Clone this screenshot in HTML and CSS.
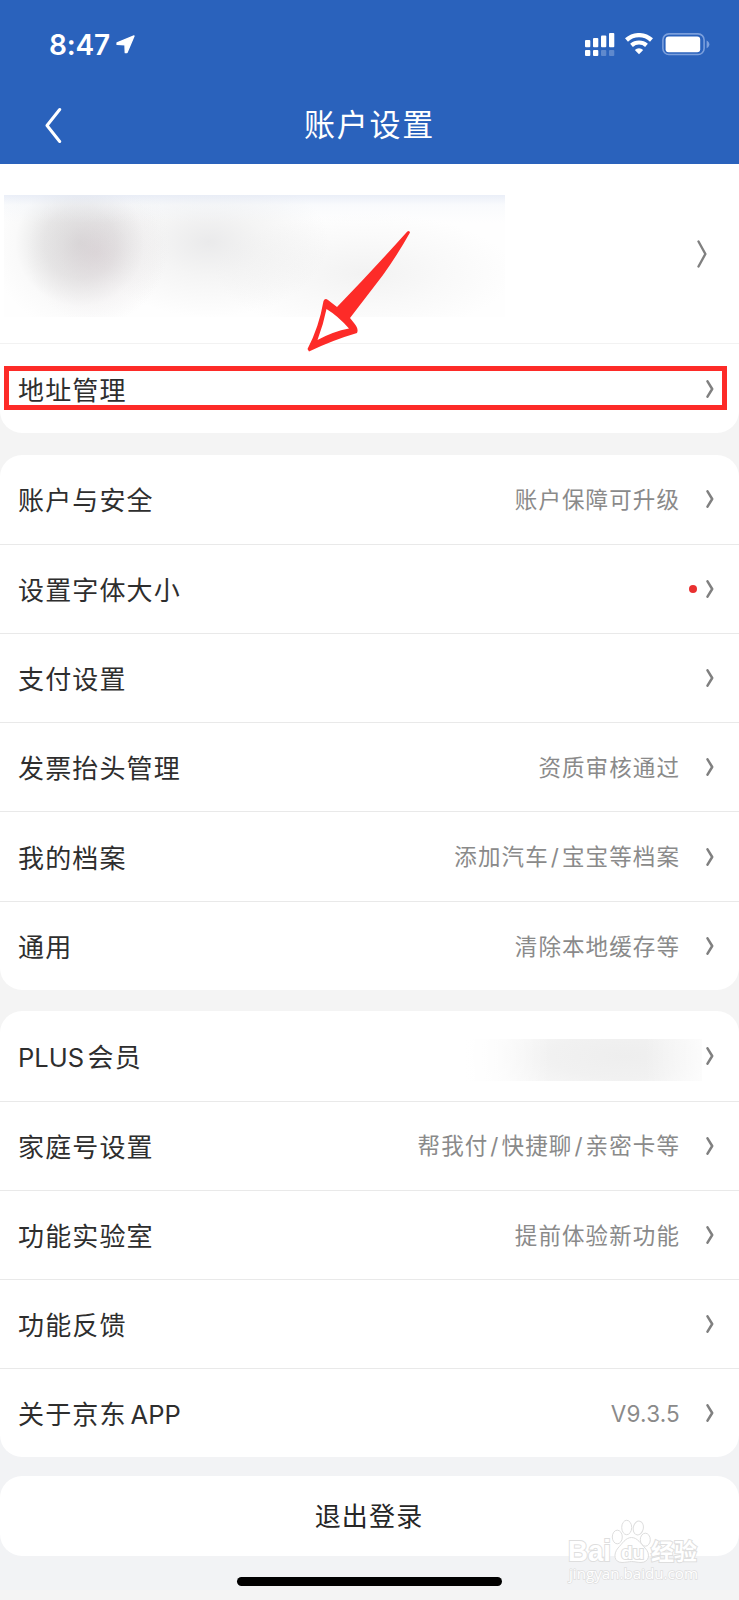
FILE: index.html
```html
<!DOCTYPE html>
<html lang="zh-CN">
<head>
    <meta charset="UTF-8">
    <meta name="viewport" content="width=device-width, initial-scale=1.0">
    <title>账户设置</title>
    <link rel="stylesheet" href="styles.css">
</head>
<body>
    <svg class="symbols" width="0" height="0">
        <symbol id="chevron" viewBox="0 0 8 18">
            <path d="M1.5 1.3 L6.2 9 L1.5 16.7" fill="none" stroke="#808080" stroke-width="2.5" stroke-linecap="round" stroke-linejoin="round"/>
        </symbol>
    </svg>

    <header class="header">
        <div class="status-bar">
            <div class="status-left">
                <span class="time">8:47</span>
                <svg class="location" width="19" height="19" viewBox="0 0 19 19">
                    <path d="M18 1 L11 17.6 L9.3 17.6 L9 9.9 L1.1 9.4 L1.1 7.8 Z" fill="#fff" stroke="#fff" stroke-width="1.4" stroke-linejoin="round"/>
                </svg>
            </div>
            <div class="status-right">
                <svg width="30" height="24" viewBox="0 0 30 24" fill="#fff">
                    <rect x="0" y="7" width="5.3" height="7.3" rx="1"/>
                    <rect x="8" y="5" width="5.3" height="9.3" rx="1"/>
                    <rect x="16" y="2.5" width="5.3" height="11.8" rx="1"/>
                    <rect x="24" y="0" width="5.3" height="14.3" rx="1"/>
                    <rect x="0" y="17" width="5.3" height="6" rx="1"/>
                    <rect x="8" y="17" width="5.3" height="6" rx="1"/>
                    <rect x="16" y="17" width="5.3" height="6" rx="1" opacity="0.25"/>
                    <rect x="24" y="17" width="5.3" height="6" rx="1" opacity="0.25"/>
                </svg>
                <svg class="wifi" width="28" height="22" viewBox="0 0 28 22">
                    <path d="M1.5 7 A18.6 18.6 0 0 1 26.5 7" fill="none" stroke="#fff" stroke-width="4.4"/>
                    <path d="M6.5 12.3 A11.5 11.5 0 0 1 21.5 12.3" fill="none" stroke="#fff" stroke-width="4.2"/>
                    <path d="M14 21.2 L9.8 17 A6.2 6.2 0 0 1 18.2 17 Z" fill="#fff"/>
                </svg>
                <svg class="battery" width="48" height="23" viewBox="0 0 48 23">
                    <rect x="0.9" y="0.9" width="41.2" height="20.6" rx="6" fill="none" stroke="#7b9fdc" stroke-width="1.6"/>
                    <rect x="3.6" y="3.6" width="34.6" height="15.6" rx="3" fill="#fff"/>
                    <path d="M44.6 7.4 C48.3 9 48.3 13.6 44.6 15.2 Z" fill="#7b9fdc"/>
                </svg>
            </div>
        </div>
        <div class="nav-bar">
            <svg class="back" width="18" height="36" viewBox="0 0 18 36">
                <path d="M14.7 2.5 L2 18.5 L14.7 34.5" fill="none" stroke="#fff" stroke-width="3" stroke-linecap="round" stroke-linejoin="round"/>
            </svg>
            <h1>账户设置</h1>
        </div>
    </header>

    <main>
        <section class="card card-profile">
            <div class="profile">
                <div class="profile-info"></div>
                <svg class="chevron-large" viewBox="0 0 10 28">
                    <path d="M1.5 1.5 L8.4 14 L1.5 26.5" fill="none" stroke="#808080" stroke-width="2.4" stroke-linecap="round" stroke-linejoin="round"/>
                </svg>
            </div>
            <div class="row">
                <span class="label">地址管理</span>
                <svg class="chevron"><use href="#chevron"/></svg>
                <div class="highlight"></div>
            </div>
            <svg class="arrow" width="106" height="122" viewBox="0 0 106 122">
                <path d="M99.3 1.5 Q101.5 0 102 2.5 Q90 24 75 45 L42 88 L46 93 Q51 99 49 103 Q25 110 1 121.5 L-0.5 119 Q11 97 15.5 71 Q17 67.5 20 70 L29 77 Q63 42 99.3 1.5 Z" fill="#fd2b28"/>
                <path d="M18.5 79 Q30 86 41 98.5 Q25 101.5 9.5 110 Q15.5 94 18.5 79 Z" fill="#fff"/>
            </svg>
        </section>

        <section class="card">
            <div class="row">
                <span class="label">账户与安全</span>
                <span class="value">账户保障可升级</span>
                <svg class="chevron"><use href="#chevron"/></svg>
            </div>
            <div class="row">
                <span class="label">设置字体大小</span>
                <span class="dot"></span>
                <svg class="chevron"><use href="#chevron"/></svg>
            </div>
            <div class="row">
                <span class="label">支付设置</span>
                <svg class="chevron"><use href="#chevron"/></svg>
            </div>
            <div class="row">
                <span class="label">发票抬头管理</span>
                <span class="value">资质审核通过</span>
                <svg class="chevron"><use href="#chevron"/></svg>
            </div>
            <div class="row">
                <span class="label">我的档案</span>
                <span class="value">添加汽车<i>/</i>宝宝等档案</span>
                <svg class="chevron"><use href="#chevron"/></svg>
            </div>
            <div class="row">
                <span class="label">通用</span>
                <span class="value">清除本地缓存等</span>
                <svg class="chevron"><use href="#chevron"/></svg>
            </div>
        </section>

        <section class="card card-last">
            <div class="row">
                <span class="label mixed"><span class="latin">PLUS</span>会员</span>
                <span class="hidden-value"></span>
                <svg class="chevron"><use href="#chevron"/></svg>
            </div>
            <div class="row">
                <span class="label">家庭号设置</span>
                <span class="value">帮我付<i>/</i>快捷聊<i>/</i>亲密卡等</span>
                <svg class="chevron"><use href="#chevron"/></svg>
            </div>
            <div class="row">
                <span class="label">功能实验室</span>
                <span class="value">提前体验新功能</span>
                <svg class="chevron"><use href="#chevron"/></svg>
            </div>
            <div class="row">
                <span class="label">功能反馈</span>
                <svg class="chevron"><use href="#chevron"/></svg>
            </div>
            <div class="row">
                <span class="label mixed">关于京东<span class="latin app">APP</span></span>
                <span class="value version">V9.3.5</span>
                <svg class="chevron"><use href="#chevron"/></svg>
            </div>
        </section>

        <div class="footer">
            <button class="logout" type="button">退出登录</button>
            <div class="home-indicator"></div>
        </div>
    </main>

    <div class="watermark">
        <svg width="134" height="62" viewBox="0 0 134 62">
            <g class="mark">
                <ellipse cx="50.3" cy="18" rx="5" ry="6.8"/>
                <ellipse cx="59.7" cy="8.5" rx="5" ry="7.2"/>
                <ellipse cx="71.3" cy="9" rx="5" ry="7" transform="rotate(12 71.3 9)"/>
                <ellipse cx="78.3" cy="20.7" rx="5" ry="6.5"/>
                <path d="M64.5 18.5 C70.5 18.5 74 25 78 29 C84 35 82 43.5 74 43.5 C70 43.5 68 42.5 64.5 42.5 C62 42.5 59 43.5 55 43.5 C47 43.5 46 35 51 29 C55 25 58.5 18.5 64.5 18.5 Z"/>
                <text class="logo" x="1" y="42" textLength="43" lengthAdjust="spacingAndGlyphs">Bai</text>
                <text class="logo du" x="54" y="40">du</text>
                <text class="logo cn" x="84" y="41">经验</text>
                <text class="site" x="2" y="60" textLength="129" lengthAdjust="spacingAndGlyphs">jingyan.baidu.com</text>
            </g>
        </svg>
    </div>
</body>
</html>
```

FILE: styles.css
```css
* {
    box-sizing: border-box;
}
body {
    position: relative;
    margin: 0;
    width: 739px;
    height: 1600px;
    overflow: hidden;
    background-color: #f4f4f4;
    color: #2e2e2e;
    font-family: "Noto Sans CJK SC", sans-serif;
}
.symbols {
    position: absolute;
}

/* header */
.header {
    height: 164px;
    background-color: #2a62bc;
    color: #fff;
}
.status-bar {
    display: flex;
    justify-content: space-between;
    height: 88px;
    padding: 33px 29.5px 0 49px;
}
.status-left, .status-right {
    display: flex;
    align-items: flex-start;
}
.time {
    margin-top: -5px;
    font-family: Inter, sans-serif;
    font-size: 28px;
    font-weight: 600;
    line-height: 34px;
    letter-spacing: -0.2px;
}
.location {
    margin: 2px 0 0 6px;
}
.wifi {
    margin-left: 10.5px;
}
.battery {
    margin-left: 8.5px;
}
.nav-bar {
    display: grid;
    grid-template-columns: 100px 1fr 100px;
    align-items: center;
    height: 74px;
}
.back {
    margin-left: 45px;
}
h1 {
    margin: 0 0 4px;
    font-size: 31px;
    font-weight: 400;
    line-height: 40px;
    letter-spacing: 1.7px;
    text-align: center;
}

/* cards */
.card {
    margin-bottom: 21.5px;
    background-color: #fff;
    border-radius: 22px;
}
.card-profile {
    position: relative;
    border-radius: 0 0 22px 22px;
}
.card-last {
    margin-bottom: 0;
    box-shadow: 0 22px 0 #f2f3f5;
}
.profile {
    display: flex;
    justify-content: space-between;
    height: 180px;
    padding: 31px 32.5px 0 4px;
    border-bottom: 1px solid #f2f2f2;
}
.profile-info {
    width: 501px;
    height: 122px;
    background:
        linear-gradient(rgba(226, 232, 245, 0.7), rgba(240, 244, 250, 0.35) 10px, rgba(255, 255, 255, 0) 28px),
        radial-gradient(ellipse 70px 70px at 92px 58px, rgba(200, 176, 188, 0.25), rgba(210, 196, 203, 0.13) 50%, rgba(255, 255, 255, 0)),
        radial-gradient(ellipse 90px 88px at 76px 48px, rgba(195, 195, 195, 0.58), rgba(200, 200, 200, 0.42) 40%, rgba(225, 225, 225, 0.14) 72%, rgba(255, 255, 255, 0)),
        radial-gradient(ellipse 120px 75px at 205px 47px, rgba(210, 210, 212, 0.45), rgba(218, 218, 218, 0.26) 45%, rgba(255, 255, 255, 0)),
        radial-gradient(ellipse 150px 60px at 360px 78px, rgba(225, 225, 225, 0.4), rgba(230, 230, 230, 0.2) 55%, rgba(255, 255, 255, 0)),
        #fefefe;
}
.chevron-large {
    width: 10px;
    height: 28px;
    margin-top: 45px;
}
.row {
    position: relative;
    display: flex;
    align-items: center;
    height: 89.2px;
    padding: 0 25.5px 0 18px;
}
.row + .row {
    border-top: 1px solid #e9e9e9;
}
.label {
    margin-right: auto;
    font-size: 26px;
    letter-spacing: 1.15px;
    line-height: 38px;
}
.mixed {
    padding-top: 2px;
}
.latin {
    font-family: Inter, sans-serif;
    font-size: 25.5px;
    letter-spacing: 0;
    margin-right: 3.5px;
}
.app {
    margin: 0 0 0 4px;
}
.value {
    padding-bottom: 2px;
    color: #8a8a8a;
    font-size: 22.5px;
    letter-spacing: 1.1px;
    line-height: 34px;
}
.value i {
    margin: 0 2px;
    font-family: Inter, sans-serif;
    font-style: normal;
}
.version {
    padding-top: 2px;
    padding-bottom: 0;
    font-family: Inter, sans-serif;
    letter-spacing: 0.2px;
}
.chevron {
    width: 8px;
    height: 18px;
    margin-left: 25.5px;
}
.dot {
    width: 8px;
    height: 8px;
    margin-right: -16.5px;
    border-radius: 50%;
    background-color: #e93030;
}
.hidden-value {
    width: 238px;
    height: 42px;
    margin: 9px -22px 0 0;
    background:
        linear-gradient(90deg, #fff, rgba(255, 255, 255, 0.7) 14%, rgba(255, 255, 255, 0) 36%, rgba(255, 255, 255, 0) 76%, rgba(255, 255, 255, 0.75)),
        radial-gradient(ellipse 160px 50px at 160px 17px, #eeeeee, #f1f1f1 45%, #fafafa);
}

/* marker around the address row */
.highlight {
    position: absolute;
    left: 3.5px;
    right: 12px;
    top: 22px;
    height: 44px;
    border: 5px solid #fd2b28;
}
.arrow {
    position: absolute;
    left: 308px;
    top: 66px;
    overflow: visible;
}

/* logout */
.footer {
    height: 145px;
    padding-top: 18.5px;
    background: linear-gradient(#f2f3f5 133px, #f4f4f4 133px);
}
.card-last {
    position: relative;
}
.logout {
    position: relative;
    display: block;
    width: 100%;
    height: 80px;
    padding: 0 1px 1px 0;
    border: none;
    border-radius: 22px;
    background-color: #fff;
    color: #262626;
    font-family: inherit;
    font-size: 26px;
    letter-spacing: 1.15px;
    line-height: 38px;
}
.home-indicator {
    width: 265px;
    height: 9px;
    margin: 21px auto 0;
    border-radius: 5px;
    background-color: #000;
}

/* watermark */
.watermark {
    position: absolute;
    left: 567px;
    top: 1519px;
}
.watermark svg {
    display: block;
    overflow: visible;
}
.mark {
    fill: #fff;
    stroke: #dedede;
    stroke-width: 1;
}
.mark text {
    paint-order: stroke;
    stroke-width: 2;
}
.logo {
    font-family: "Liberation Sans", sans-serif;
    font-size: 30px;
    font-weight: bold;
}
.mark .du {
    font-size: 19px;
}
.mark .cn {
    font-family: "Noto Sans CJK SC", sans-serif;
    font-size: 23px;
}
.mark .site {
    font-family: "Open Sans", sans-serif;
    font-size: 15px;
    stroke-width: 1.4;
}
```
